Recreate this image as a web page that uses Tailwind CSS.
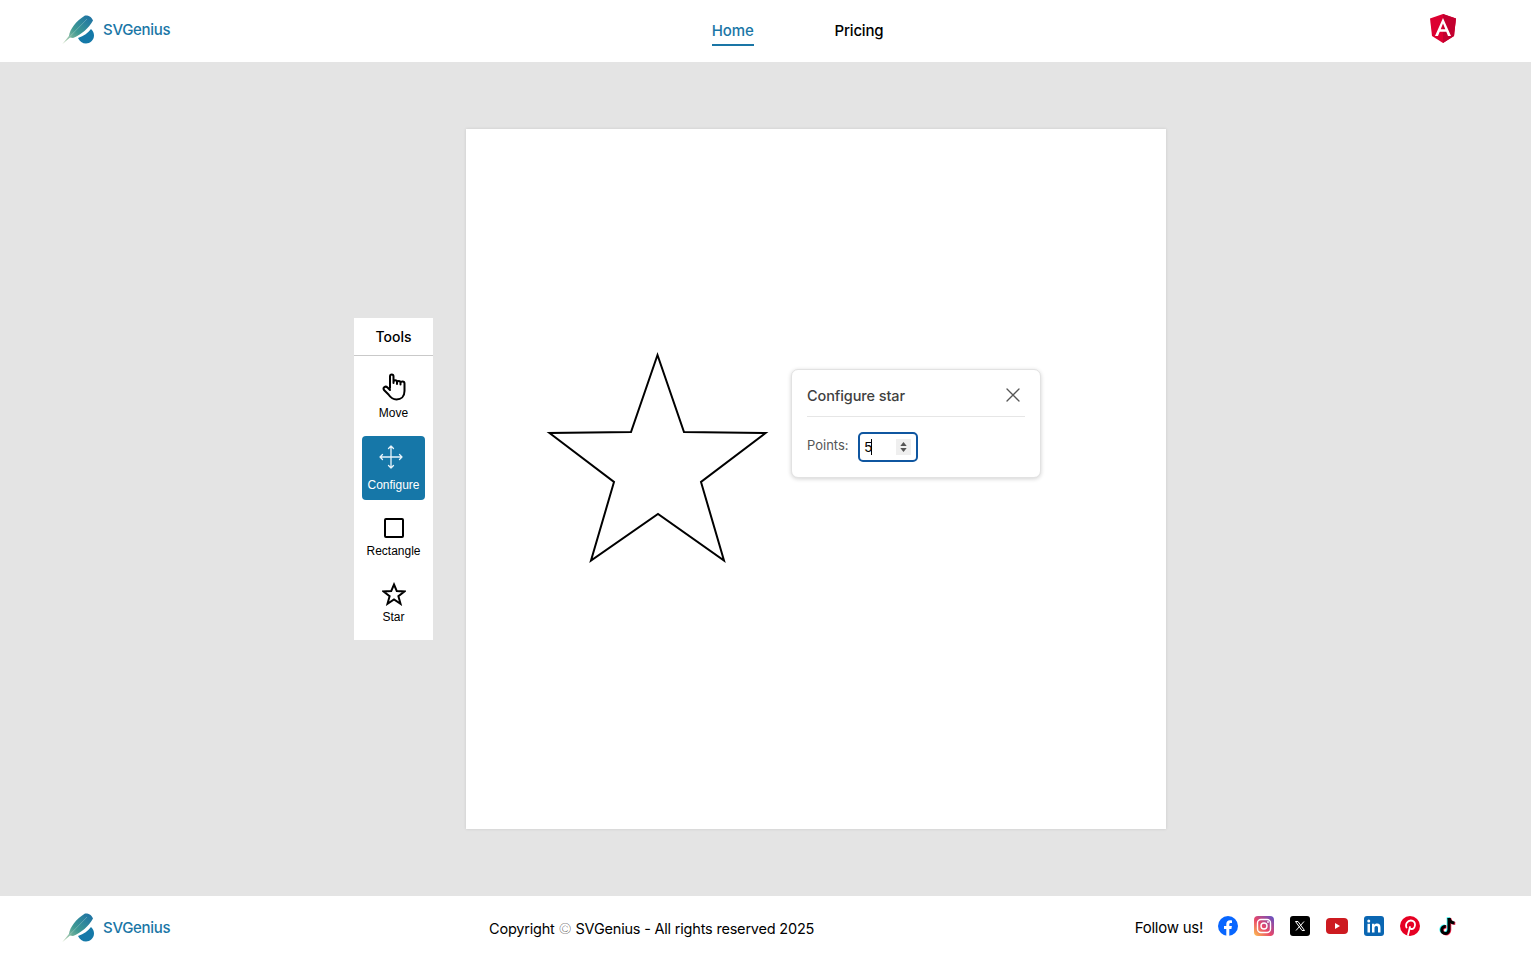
<!DOCTYPE html>
<html lang="en">
<head>
  <meta charset="UTF-8">
  <title>SVGenius</title>
  <script src="https://cdn.jsdelivr.net/npm/@tailwindcss/browser@4"></script>
</head>
<body class="w-full h-screen overflow-hidden flex flex-col bg-[#e4e4e4] text-black font-['Inter',sans-serif]">

  <!-- Header -->
  <header class="h-[62px] shrink-0 bg-white flex items-center justify-between pl-[62px] pr-[75px]">
    <a class="flex items-center gap-[9px] w-[200px]">
      <svg class="w-[32px] h-[32px]" viewBox="0 0 32 32">
        <defs>
          <linearGradient id="feather" x1="0" y1="1" x2="1" y2="0">
            <stop offset="0" stop-color="#b7cfa3"/>
            <stop offset="0.45" stop-color="#3f9a94"/>
            <stop offset="1" stop-color="#1a6ea5"/>
          </linearGradient>
        </defs>
        <path d="M0.500 29 L7 21 C8 14 14 6 23 0.500 C26 0 30 2 31 5.500 C27 13 19 20 11 23 L8 22.500 Z" fill="url(#feather)"/>
        <path d="M2 27.500 L25 4" stroke="#fff" stroke-opacity="0.350" stroke-width="0.700"/>
        <path d="M16 23 C22 21 26 18 29 14 C31 16 32 18 32 20.500 C32 25 28 28.500 24 28.500 C20.500 28.500 17.500 26.500 16 23 Z" fill="#1579a8"/>
      </svg>
      <span class="text-[15px] font-medium text-[#1a76a6] -mt-[1px] tracking-[-0.3px]">SVGenius</span>
    </a>
    <nav class="flex items-start gap-[81px] text-[15px] font-medium ml-[77px]">
      <a class="text-[#1a76a6] border-b-2 border-[#1a76a6] pb-[1px] leading-[24px] mt-[3px] tracking-[-0.1px]">Home</a>
      <a class="leading-[24px] mt-[3px] tracking-[-0.2px]">Pricing</a>
    </nav>
    <div class="w-[200px] flex justify-end -mt-[5px]">
      <svg class="w-[26px] h-[29px]" viewBox="0 0 26 29">
        <path d="M13 0 L26 4.500 L24 22 L13 29 L2 22 L0 4.500 Z" fill="#dd0031"/>
        <path d="M13 0 L26 4.500 L24 22 L13 29 Z" fill="#c3002f"/>
        <path d="M13 4 L5 22 H8 L9.700 17.700 H16.300 L18 22 H21 Z M13 9.500 L15.300 15.200 H10.700 Z" fill="#fff" fill-rule="evenodd"/>
      </svg>
    </div>
  </header>

  <!-- Editor -->
  <main class="flex-1 flex items-center pl-[354px]">
    <aside class="w-[79px] h-[322px] bg-white flex flex-col items-center font-['Liberation_Sans',sans-serif] text-[12px]">
      <div class="w-full h-[38px] shrink-0 border-b border-[#c9c9c9] flex items-center justify-center text-[14px] font-['Inter',sans-serif] font-medium">Tools</div>
      <button class="mt-[17px] flex flex-col items-center h-[50px]">
        <svg class="w-[26px] h-[28px] ml-[3px]" viewBox="0 0 26 28" fill="none" stroke="#000" stroke-width="2" stroke-linecap="round" stroke-linejoin="round">
          <path d="M8 15 V3.500 C8 0.800 11.500 0.800 11.500 3.500 V10 M11.500 9 C11.500 6.800 15 6.800 15 9 V11 M15 9.500 C15 7.500 18.500 7.500 18.500 9.500 V11.500 M18.500 10 C18.500 8 22.500 8 22.500 10.500 V18 C22.500 23.500 19 26.500 14.500 26.500 C10.500 26.500 8.500 24.500 6.500 21.500 L2 17 C0.500 14.500 3.500 12.500 5.500 14.500 L8 17"/>
        </svg>
        <span class="mt-[5px] leading-[14px]">Move</span>
      </button>
      <button class="mt-[13px] w-[63px] h-[64px] shrink-0 rounded-[4px] bg-[#1677a8] text-white flex flex-col items-center pt-[8px]">
        <svg class="w-[26px] h-[26px] -ml-[5px]" viewBox="0 0 26 26" fill="none" stroke="#e8f4fa" stroke-width="1.300" stroke-linecap="round" stroke-linejoin="round">
          <path d="M13 2 V24 M2 13 H24 M10.500 4.500 L13 2 L15.500 4.500 M10.500 21.500 L13 24 L15.500 21.500 M4.500 10.500 L2 13 L4.500 15.500 M21.500 10.500 L24 13 L21.500 15.500"/>
        </svg>
        <span class="mt-[8px] leading-[14px]">Configure</span>
      </button>
      <button class="mt-[18px] flex flex-col items-center">
        <span class="block w-[20px] h-[20px] ml-[1px] border-2 border-black rounded-[2px]"></span>
        <span class="mt-[6px] leading-[14px]">Rectangle</span>
      </button>
      <button class="mt-[24px] flex flex-col items-center">
        <svg class="w-[24px] h-[24px]" viewBox="0 0 24 24" fill="none" stroke="#000" stroke-width="2" stroke-linejoin="miter">
          <path d="M12 2.500 L14.800 9.100 L22.500 9.500 L16.400 14.200 L18.500 21.800 L12 17.500 L5.500 21.800 L7.600 14.200 L1.500 9.500 L9.200 9.100 Z"/>
        </svg>
        <span class="mt-[4px] leading-[14px]">Star</span>
      </button>
    </aside>

    <section class="relative ml-[33px] w-[700px] h-[700px] bg-white shadow-[0_0_3px_rgba(0,0,0,0.12)]">
      <svg class="absolute inset-0" width="700" height="700" viewBox="0 0 700 700" fill="none">
        <polygon points="191.500,226 218,303 299.500,304 235,353 258,431.500 192,385 125,431.500 148,353 83.500,304 165,303" stroke="#000" stroke-width="2"/>
      </svg>
      <div class="absolute left-[325px] top-[240px] w-[250px] h-[109px] bg-white rounded-[7px] border border-[#e2e2e2] shadow-[0_1px_4px_rgba(0,0,0,0.18)] px-[15px] text-[#444]">
        <div class="h-[47px] border-b border-[#e6e6e6] flex items-center justify-between pt-[5px]">
          <span class="text-[14.500px] font-medium tracking-[-0.1px] text-[#3f3f3f]">Configure star</span>
          <svg class="w-[14px] h-[14px] mr-[5px] -mt-[1px]" viewBox="0 0 14 14" fill="none" stroke="#555" stroke-width="1.300" stroke-linecap="round">
            <path d="M1 1 L13 13 M13 1 L1 13"/>
          </svg>
        </div>
        <div class="flex items-center mt-[15px]">
          <span class="text-[13px] text-[#555] leading-[30px] -mt-[4px]">Points:</span>
          <div class="relative ml-[9px] w-[60px] h-[30px] rounded-[5px] border-2 border-[#0f56a0] flex items-center pl-[5px] font-['Liberation_Sans',sans-serif] text-[14px] text-black">
            <span>5</span><span class="block w-px h-[16px] bg-black -ml-[1px]"></span>
            <span class="absolute right-[5px] top-[5px] w-[15px] h-[16px] bg-[#efefef] flex flex-col items-center justify-center gap-[2px]">
              <svg class="w-[7px] h-[4px]" viewBox="0 0 8 5"><path d="M4 0 L8 5 H0 Z" fill="#555"/></svg>
              <svg class="w-[7px] h-[4px]" viewBox="0 0 8 5"><path d="M4 5 L8 0 H0 Z" fill="#555"/></svg>
            </span>
          </div>
        </div>
      </div>
    </section>
  </main>

  <!-- Footer -->
  <footer class="h-[58px] shrink-0 bg-white flex items-center pt-[7px] pl-[62px] pr-[73px]">
    <a class="flex items-center gap-[9px] w-[427px]">
      <svg class="w-[32px] h-[32px]" viewBox="0 0 32 32">
        <defs>
          <linearGradient id="feather2" x1="0" y1="1" x2="1" y2="0">
            <stop offset="0" stop-color="#b7cfa3"/>
            <stop offset="0.45" stop-color="#3f9a94"/>
            <stop offset="1" stop-color="#1a6ea5"/>
          </linearGradient>
        </defs>
        <path d="M0.500 29 L7 21 C8 14 14 6 23 0.500 C26 0 30 2 31 5.500 C27 13 19 20 11 23 L8 22.500 Z" fill="url(#feather2)"/>
        <path d="M2 27.500 L25 4" stroke="#fff" stroke-opacity="0.350" stroke-width="0.700"/>
        <path d="M16 23 C22 21 26 18 29 14 C31 16 32 18 32 20.500 C32 25 28 28.500 24 28.500 C20.500 28.500 17.500 26.500 16 23 Z" fill="#1579a8"/>
      </svg>
      <span class="text-[15px] font-medium text-[#1a76a6] -mt-[1px] tracking-[-0.3px]">SVGenius</span>
    </a>
    <p class="text-[14.500px] tracking-[-0.2px]">Copyright <span class="font-thin">©</span> SVGenius - All rights reserved 2025</p>
    <div class="ml-auto flex items-center">
      <span class="text-[15px] tracking-[-0.25px] mr-[15px]">Follow us!</span>
      <div class="flex items-center gap-[16px] -mt-[6px]">
        <svg class="w-[20px] h-[20px]" viewBox="0 0 20 20">
          <circle cx="10" cy="10" r="10" fill="#0866ff"/>
          <path d="M8.300 20 V13 H6 V10 H8.300 V8 C8.300 5.500 9.800 4.200 12 4.200 C13 4.200 14 4.400 14 4.400 V6.900 H12.800 C11.500 6.900 11.300 7.600 11.300 8.400 V10 H13.900 L13.400 13 H11.300 V20 Z" fill="#fff"/>
        </svg>
        <svg class="w-[20px] h-[20px]" viewBox="0 0 20 20" fill="none">
          <defs>
            <linearGradient id="ig" x1="0" y1="1" x2="1" y2="0">
              <stop offset="0" stop-color="#fdc24e"/>
              <stop offset="0.45" stop-color="#e8476a"/>
              <stop offset="1" stop-color="#5b51c8"/>
            </linearGradient>
          </defs>
          <rect width="20" height="20" rx="4" fill="url(#ig)"/>
          <rect x="3.500" y="3.500" width="13" height="13" rx="3.500" stroke="#fff" stroke-width="1.400"/>
          <circle cx="10" cy="10" r="3" stroke="#fff" stroke-width="1.400"/>
          <circle cx="14" cy="6" r="0.900" fill="#fff"/>
        </svg>
        <svg class="w-[20px] h-[20px]" viewBox="0 0 20 20">
          <rect width="20" height="20" rx="3" fill="#000"/>
          <path d="M5.500 5.500 H8 L14.500 14.500 H12 Z" fill="none" stroke="#fff" stroke-width="1"/>
          <path d="M14 5.500 L6 14.500" stroke="#fff" stroke-width="1"/>
        </svg>
        <svg class="w-[22px] h-[16px]" viewBox="0 0 22 16">
          <rect width="22" height="16" rx="4" fill="#cd1a20"/>
          <path d="M9 5 L14 8 L9 11 Z" fill="#fff"/>
        </svg>
        <svg class="w-[20px] h-[20px]" viewBox="0 0 20 20">
          <rect width="20" height="20" rx="3" fill="#0a66b2"/>
          <rect x="3.500" y="7.800" width="2.500" height="8.700" fill="#fff"/>
          <circle cx="4.750" cy="4.900" r="1.500" fill="#fff"/>
          <path d="M8 7.800 H10.400 V9 C11 8 12 7.600 13.200 7.600 C15.500 7.600 16.500 9 16.500 11.500 V16.500 H14 V12 C14 10.700 13.600 9.900 12.500 9.900 C11.200 9.900 10.500 10.700 10.500 12 V16.500 H8 Z" fill="#fff"/>
        </svg>
        <svg class="w-[20px] h-[20px]" viewBox="0 0 20 20">
          <circle cx="10" cy="10" r="10" fill="#e60023"/>
          <path d="M8 19 L10 11 M6.500 11.500 C5 8 7.500 4.500 10.800 4.500 C13.800 4.500 15.200 6.500 15 9 C14.800 11.500 13.200 13.200 11.300 13 C10.200 12.900 9.800 12.200 9.700 11.600" fill="none" stroke="#fff" stroke-width="1.800" stroke-linecap="round"/>
        </svg>
        <svg class="w-[20px] h-[20px] ml-[2px]" viewBox="0 0 20 20" fill="none" stroke-width="3">
          <path d="M11 2 V13.500 C11 16 9.300 17.500 7.300 17.500 C5.300 17.500 3.700 16 3.700 14 C3.700 12 5.300 10.300 7.800 10.500" stroke="#25f4ee" transform="translate(-0.800 -0.500)"/>
          <path d="M11 2 C11.500 5 13.500 6.800 16.500 7" stroke="#25f4ee" transform="translate(-0.800 -0.500)"/>
          <path d="M11 2 V13.500 C11 16 9.300 17.500 7.300 17.500 C5.300 17.500 3.700 16 3.700 14 C3.700 12 5.300 10.300 7.800 10.500" stroke="#fe2c55" transform="translate(0.800 0.500)"/>
          <path d="M11 2 C11.500 5 13.500 6.800 16.500 7" stroke="#fe2c55" transform="translate(0.800 0.500)"/>
          <path d="M11 2 V13.500 C11 16 9.300 17.500 7.300 17.500 C5.300 17.500 3.700 16 3.700 14 C3.700 12 5.300 10.300 7.800 10.500" stroke="#000"/>
          <path d="M11 2 C11.500 5 13.500 6.800 16.500 7" stroke="#000"/>
        </svg>
      </div>
    </div>
  </footer>
</body>
</html>
